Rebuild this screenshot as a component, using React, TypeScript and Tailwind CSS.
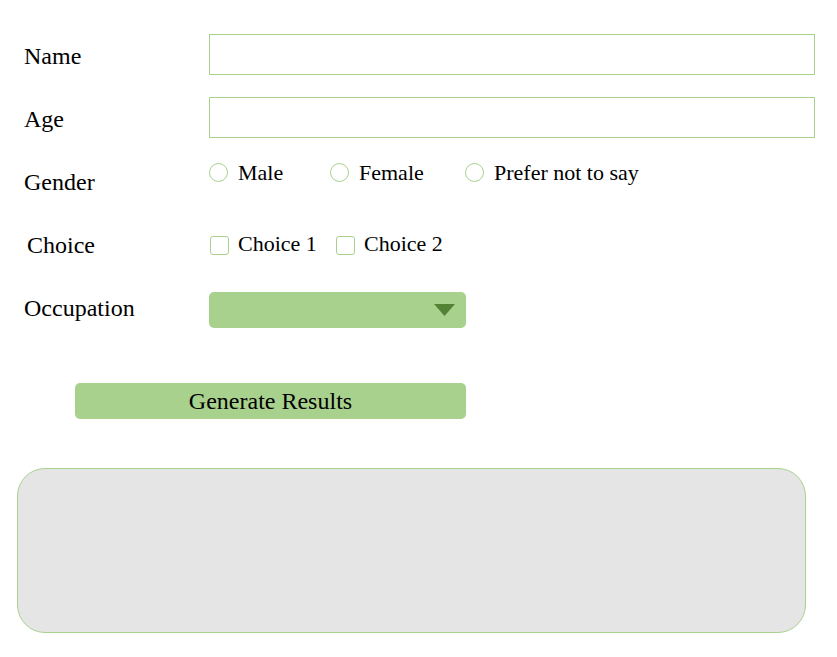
import { useState } from 'react';

const genders = [
  { id: 'male', label: 'Male', width: 'w-[121px]' },
  { id: 'female', label: 'Female', width: 'w-[135px]' },
  { id: 'none', label: 'Prefer not to say', width: '' },
];

export default function App() {
  const [gender, setGender] = useState<string | null>(null);
  const [choices, setChoices] = useState<Record<string, boolean>>({});

  return (
    <div className="min-h-[657px] w-[837px] bg-white pt-[34px] text-black font-[family-name:'Liberation_Serif','Times_New_Roman',serif]">
      {/* Name */}
      <div className="flex h-[63px] pl-[24px]">
        <label className="w-[185px] mt-[8px] text-[24px] leading-[28px]">Name</label>
        <input className="w-[606px] h-[41px] border border-[#a9d18e] outline-none px-2 text-[20px]" />
      </div>

      {/* Age */}
      <div className="flex h-[63px] pl-[24px]">
        <label className="w-[185px] mt-[8px] text-[24px] leading-[28px]">Age</label>
        <input className="w-[606px] h-[41px] border border-[#a9d18e] outline-none px-2 text-[20px]" />
      </div>

      {/* Gender */}
      <div className="flex h-[63px] pl-[24px]">
        <span className="w-[185px] mt-[8px] text-[24px] leading-[28px]">Gender</span>
        <div className="flex h-[25px] items-center">
          {genders.map((g) => (
            <button
              key={g.id}
              onClick={() => setGender(g.id)}
              className={`flex items-center gap-[10px] ${g.width}`}
            >
              <span className="w-[19px] h-[19px] rounded-full border border-[#a9d18e] flex items-center justify-center">
                {gender === g.id && <span className="w-[9px] h-[9px] rounded-full bg-[#548235]" />}
              </span>
              <span className="text-[22px] leading-[25px] -mt-[1px]">{g.label}</span>
            </button>
          ))}
        </div>
      </div>

      {/* Choice */}
      <div className="flex h-[63px] pl-[27px]">
        <span className="w-[183px] mt-[8px] text-[24px] leading-[28px]">Choice</span>
        <div className="flex mt-[12px] h-[20px] items-center">
          {['Choice 1', 'Choice 2'].map((c, i) => (
            <button
              key={c}
              onClick={() => setChoices({ ...choices, [c]: !choices[c] })}
              className={`flex items-center gap-[9px] ${i === 0 ? 'w-[126px]' : ''}`}
            >
              <span className="w-[19px] h-[19px] rounded-[3px] border border-[#a9d18e] flex items-center justify-center text-[14px] leading-none text-[#548235]">
                {choices[c] ? '✓' : ''}
              </span>
              <span className="text-[22px] leading-[25px] -mt-[4px]">{c}</span>
            </button>
          ))}
        </div>
      </div>

      {/* Occupation */}
      <div className="flex h-[63px] pl-[24px]">
        <span className="w-[185px] mt-[8px] text-[24px] leading-[28px]">Occupation</span>
        <div className="mt-[6px] w-[257px] h-[36px] rounded-[5px] bg-[#a9d18e] flex items-center justify-end pr-[11px]">
          <svg width="21" height="12" viewBox="0 0 21 12">
            <polygon points="0,0 21,0 10.5,12" fill="#548235" />
          </svg>
        </div>
      </div>

      {/* Generate */}
      <div className="pl-[75px] mt-[34px]">
        <button className="w-[391px] h-[36px] rounded-[5px] bg-[#a9d18e] text-[24px] leading-[28px]">
          Generate Results
        </button>
      </div>

      {/* Results */}
      <div className="ml-[17px] mt-[49px] w-[789px] h-[165px] rounded-[28px] border border-[#a9d18e] bg-[#e5e5e5]" />
    </div>
  );
}
